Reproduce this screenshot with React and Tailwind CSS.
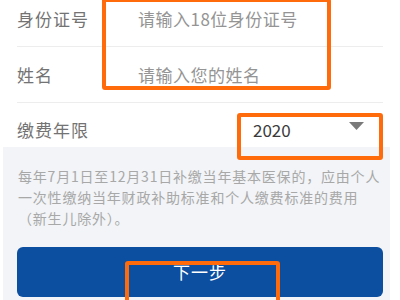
import React from 'react';

// 参保缴费表单（带标注框）
const Row = ({ label, children, className = '' }) => (
  <div className={`flex items-center ${className}`}>
    <div className="w-[121px] shrink-0 text-[17px] leading-[24px] tracking-[1px] text-[#737373]">
      {label}
    </div>
    <div className="flex-1 min-w-0">{children}</div>
  </div>
);

export default function App() {
  return (
    <div className="relative w-[400px] h-[300px] overflow-hidden bg-white font-['Noto_Sans_CJK_SC',sans-serif]">
      {/* 表单 */}
      <div className="-mt-[8px] ml-[17px] w-[366px]">
        <Row label="身份证号" className="h-[55px] border-b border-[#ededed]">
          <span className="text-[17px] leading-[24px] tracking-[0.5px] text-[#949494]">请输入18位身份证号</span>
        </Row>
        <Row label="姓名" className="h-[56px] border-b border-[#ededed]">
          <span className="text-[17px] leading-[24px] tracking-[0.5px] text-[#949494]">请输入您的姓名</span>
        </Row>
        <Row label="缴费年限" className="h-[44px] pt-[10px]">
          <div className="flex items-center">
            <span className="ml-[115px] text-[17px] leading-[24px] text-[#3a3a3a]">2020</span>
            <svg className="ml-auto mr-[19px] -mt-[9px]" width="15" height="8" viewBox="0 0 15 8">
              <path d="M0 0 L15 0 L7.5 8 Z" fill="#7a7a7a" />
            </svg>
          </div>
        </Row>
      </div>

      {/* 提示与按钮 */}
      <div className="ml-[3px] w-[387px] h-[160px] bg-[#f2f4f7] pt-[19px]">
        <p className="ml-[15px] w-[366px] text-[14px] leading-[21px] tracking-[0.8px] text-[#a8a8a8]">
          每年7月1日至12月31日补缴当年基本医保的，应由个人一次性缴纳当年财政补助标准和个人缴费标准的费用（新生儿除外）。
        </p>
        <button className="mt-[18px] ml-[14px] w-[366px] h-[50px] rounded-[6px] bg-[#0c4ea0] text-white text-[17px] tracking-[1px] flex items-center justify-center">
          下一步
        </button>
      </div>

      {/* 标注框 */}
      <div className="absolute left-[102px] top-[-2px] w-[229px] h-[92px] border-4 border-[#ff6b0a] rounded-[3px]" />
      <div className="absolute left-[237px] top-[113px] w-[146px] h-[47px] border-4 border-[#ff6b0a] rounded-[3px]" />
      <div className="absolute left-[125px] top-[261px] w-[155px] h-[44px] border-4 border-[#ff6b0a] rounded-[3px]" />
    </div>
  );
}
